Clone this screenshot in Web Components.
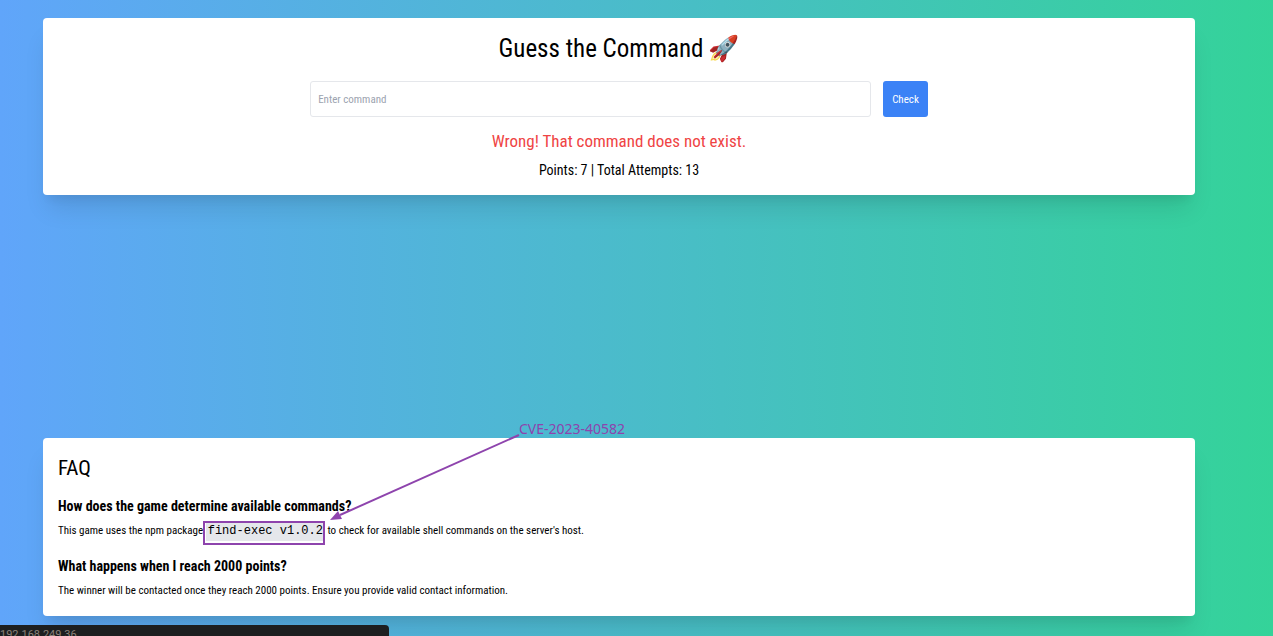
<!DOCTYPE html>
<html lang="en">
<head>
<meta charset="utf-8">
<title>Guess the Command</title>
<style>
body { margin: 0; font-family: "Ubuntu Condensed", "Roboto Condensed", Roboto, sans-serif; color: #000; }
</style>
</head>
<body>
<game-page>
  <game-card><guess-form></guess-form></game-card>
  <game-card>
    <faq-list>
      <faq-item>
        <span slot="question">How does the game determine available commands?</span>
        This game uses the npm package <package-tag>find-exec v1.0.2</package-tag> to check for available shell commands on the server's host.
      </faq-item>
      <faq-item>
        <span slot="question">What happens when I reach 2000 points?</span>
        The winner will be contacted once they reach 2000 points. Ensure you provide valid contact information.
      </faq-item>
    </faq-list>
  </game-card>
  <status-bar slot="status">192.168.249.36</status-bar>
</game-page>
<script>
function define(name, html) {
  const template = document.createElement('template');
  template.innerHTML = html;
  customElements.define(name, class extends HTMLElement {
    constructor() {
      super();
      this.attachShadow({ mode: 'open' }).append(template.content.cloneNode(true));
    }
  });
}

define('game-page', `
<style>
:host { display: block; position: relative; overflow: hidden; background: linear-gradient(to right, #60a5fa, #34d399); }
main { box-sizing: border-box; min-height: 100vh; padding: 18px 78px 20px 43px; display: flex; flex-direction: column; justify-content: space-between; gap: 24px; }
</style>
<main><slot></slot></main>
<slot name="status"></slot>`);

define('game-card', `
<style>
:host { display: block; box-sizing: border-box; background: #fff; border-radius: 4px; padding: 15px; box-shadow: 0 18px 23px -5px rgba(0,0,0,.1), 0 9px 9px -5px rgba(0,0,0,.06); }
</style>
<slot></slot>`);

define('guess-form', `
<style>
:host { display: block; text-align: center; }
h1 { display: flex; justify-content: center; align-items: center; gap: 5px; margin: 0 0 17px; font-size: 25px; line-height: 31px; font-weight: 400; }
form { display: flex; justify-content: center; gap: 12px; margin: 0 0 13px; }
input { box-sizing: border-box; width: 50%; height: 36px; padding: 0 7px; border: 1px solid #e5e7eb; border-radius: 3px; font: inherit; font-size: 11px; background: #fff; }
input::placeholder { color: #9ca3af; opacity: 1; }
button { height: 36px; padding: 0 9px; border: 0; border-radius: 3px; background: #3b82f6; color: #fff; font: inherit; font-size: 11px; }
p { margin: 0; }
.result { color: #ef4444; font-size: 17px; line-height: 22px; margin-bottom: 8px; }
.score { font-size: 14px; line-height: 20px; }
</style>
<h1><span>Guess the Command</span><span>🚀</span></h1>
<form><input type="text" placeholder="Enter command" aria-label="Enter command"><button type="button">Check</button></form>
<p class="result" role="status">Wrong! That command does not exist.</p>
<p class="score">Points: 7 | Total Attempts: 13</p>`);

define('faq-list', `
<style>
:host { display: block; }
h2 { margin: 0 0 13px; font-size: 21px; line-height: 30px; font-weight: 400; }
div { display: flex; flex-direction: column; gap: 15px; }
</style>
<h2>FAQ</h2>
<div><slot></slot></div>`);

define('faq-item', `
<style>
:host { display: block; }
h3 { margin: 0 0 5px; font-size: 14px; line-height: 20px; }
p { margin: 0; font-size: 11px; line-height: 20px; }
</style>
<h3><slot name="question"></slot></h3>
<p><slot></slot></p>`);

define('package-tag', `
<style>
:host { display: inline-block; position: relative; vertical-align: top; }
code { display: block; padding: 0 2px; background: #e5e7eb; font: 12px/20px "Liberation Mono", monospace; }
.frame { position: absolute; inset: 0 0 -4px -3px; border: 2px solid #8e44ad; }
svg { position: absolute; left: 100%; bottom: 100%; overflow: visible; }
.note { position: absolute; left: calc(100% + 194px); bottom: 104px; font: 14px/16px "Noto Sans", sans-serif; color: #8e44ad; white-space: nowrap; }
</style>
<code><slot></slot></code><span class="frame"></span>
<svg width="194" height="86" viewBox="0 0 194 86" aria-hidden="true"><path d="M194 0L15 80" stroke="#8e44ad" stroke-width="2"/><path d="M5 85L13 76L17 84Z" fill="#8e44ad"/></svg>
<span class="note">CVE-2023-40582</span>`);

define('status-bar', `
<style>
:host { position: absolute; left: 0; bottom: 0; width: 389px; height: 11px; overflow: hidden; background: #1d1f20; border-top-right-radius: 4px; font: 11px/20px Roboto, sans-serif; color: #8b8178; }
</style>
<slot></slot>`);
</script>
</body>
</html>
